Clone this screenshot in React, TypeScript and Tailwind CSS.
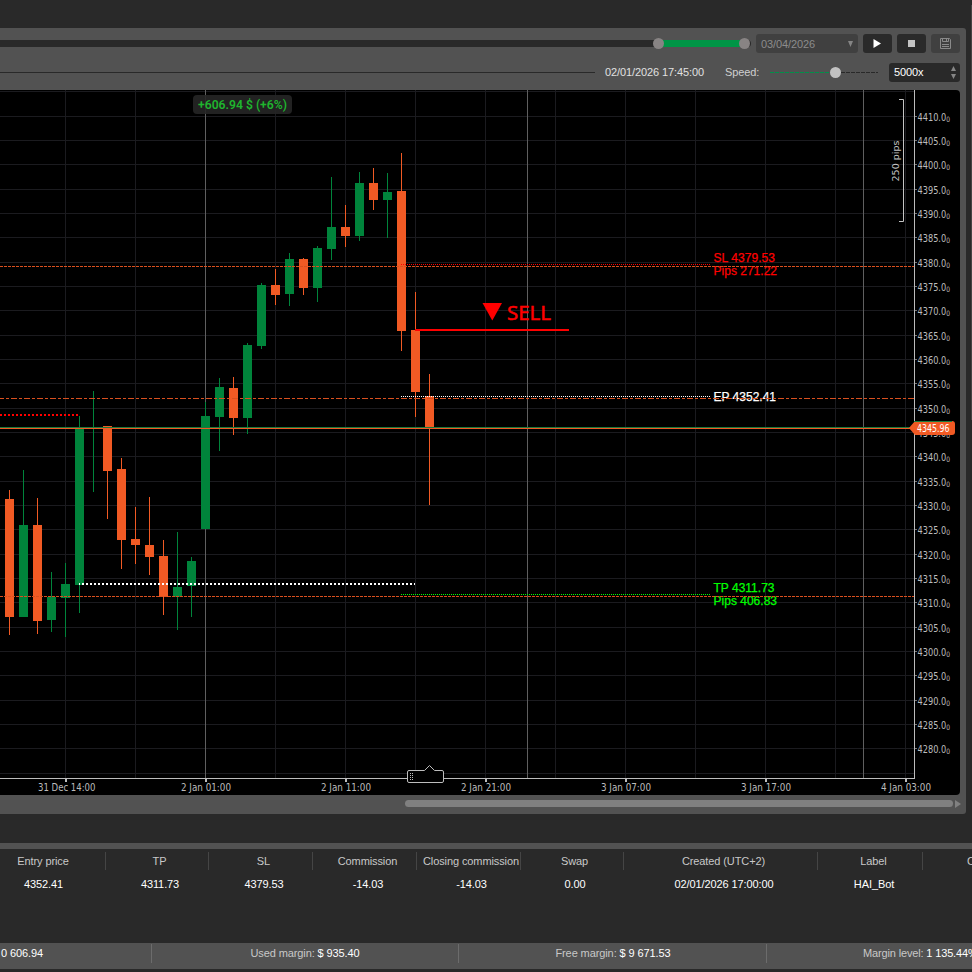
import clsx from 'clsx';

type Candle = [high: number, top: number, bottom: number, low: number, up: boolean];

const FIRST_X = 9;
const STEP_X = 14;

const CANDLES: Candle[] = [
  [490, 499, 617, 635, false],
  [470, 525, 617, 617, true],
  [498, 525, 621, 634, false],
  [572, 597, 620, 632, true],
  [563, 584, 598, 637, true],
  [416, 428, 585, 613, true],
  [391, 427, 428, 492, true],
  [426, 426, 471, 519, false],
  [458, 469, 540, 569, false],
  [507, 539, 545, 564, false],
  [497, 545, 557, 575, false],
  [540, 556, 597, 615, false],
  [532, 587, 597, 630, true],
  [557, 561, 586, 617, true],
  [402, 416, 529, 529, true],
  [378, 387, 417, 451, true],
  [377, 388, 418, 435, false],
  [343, 345, 418, 434, true],
  [283, 285, 346, 349, true],
  [269, 285, 295, 305, false],
  [253, 259, 294, 306, true],
  [258, 259, 288, 295, false],
  [246, 248, 288, 302, true],
  [177, 227, 249, 260, true],
  [205, 227, 236, 247, false],
  [172, 183, 236, 241, true],
  [168, 183, 200, 210, false],
  [173, 192, 200, 238, true],
  [153, 191, 331, 351, false],
  [292, 330, 392, 417, false],
  [374, 396, 427, 505, false],
];

const GRID_X = [65, 135, 275, 345, 415, 485, 555, 625, 695, 765, 835, 905];
const DAY_X = [205, 527, 863];

// one grid line every 5.00, starting one step above 4410
const GRID_Y = Array.from({ length: 29 }, (_, i) => 116 + Math.floor(((i - 1) * 73) / 3));

const PRICES = Array.from({ length: 27 }, (_, i) => ({
  label: `${4410 - i * 5}.0`,
  y: 116 + Math.floor((i * 73) / 3),
}));

const TIMES = [
  { x: 65, start: 38, width: 57.5, label: '31 Dec 14:00' },
  { x: 205, start: 181, width: 50, label: '2 Jan 01:00' },
  { x: 345, start: 321, width: 50, label: '2 Jan 11:00' },
  { x: 485, start: 461, width: 50, label: '2 Jan 21:00' },
  { x: 625, start: 601, width: 50, label: '3 Jan 07:00' },
  { x: 765, start: 741, width: 50, label: '3 Jan 17:00' },
  { x: 905, start: 881, width: 50, label: '4 Jan 03:00' },
];

const COLUMNS = [
  { title: 'Entry price', value: '4352.41', className: 'w-[106px] pr-[19px]' },
  { title: 'TP', value: '4311.73', className: 'w-[103px] pl-[5px]' },
  { title: 'SL', value: '4379.53', className: 'w-[104px] pl-[6px]' },
  { title: 'Commission', value: '-14.03', className: 'w-[104px] pl-[6px]' },
  { title: 'Closing commission', value: '-14.03', className: 'w-[104px] pl-[5px]' },
  { title: 'Swap', value: '0.00', className: 'w-[103px] pl-[5px]' },
  { title: 'Created (UTC+2)', value: '02/01/2026 17:00:00', className: 'w-[194px] pl-[6px]' },
  { title: 'Label', value: 'HAI_Bot', className: 'w-[105px] pl-[7px]' },
];

function Toolbar() {
  return (
    <div className="h-[62px] text-[11px] tracking-[-0.1px]">
      <div className="flex h-[31px] items-center pr-[6px]">
        <div className="relative h-[7px] w-[751px] rounded-r-sm bg-[#292929]">
          <div className="absolute left-[659px] top-0 h-[7px] w-[85px] bg-[#009546]" />
          <div className="absolute left-[653px] top-[-2px] size-[11px] rounded-full bg-[#888484]" />
          <div className="absolute left-[739px] top-[-2px] size-[11px] rounded-full bg-[#888484]" />
        </div>
        <div className="ml-[5px] flex h-[19px] w-[102px] items-center justify-between rounded-[3px] bg-[#404040] pl-[5px] pr-[5px] text-[#8c8c8c]">
          <span className="leading-[19px] pt-px">03/04/2026</span>
          <svg width="5" height="6" viewBox="0 0 5 6">
            <path d="M0 0h5L2.5 6z" fill="#858585" />
          </svg>
        </div>
        <button className="ml-[5px] flex h-[19px] w-[29px] items-center justify-center rounded-[3px] bg-[#2a2a2a] pr-px">
          <svg width="8" height="9" viewBox="0 0 8 9">
            <path d="M0.5 0v9L8 4.5z" fill="#fff" />
          </svg>
        </button>
        <button className="ml-[5px] flex h-[19px] w-[29px] items-center justify-center rounded-[3px] bg-[#2a2a2a]">
          <span className="size-[7px] bg-[#c4c4c4]" />
        </button>
        <button className="ml-[5px] flex h-[19px] w-[29px] items-center justify-center rounded-[3px] bg-[#404040]">
          <svg width="11" height="11" viewBox="0 0 11 11" fill="none" stroke="#8a8a8a">
            <path d="M.5 .5h9l1 1v9h-10z" />
            <path d="M2.5 .5v3h6v-3M6.5 1v2M2 6.5h7M2 8.5h7" />
          </svg>
        </button>
      </div>
      <div className="flex h-[27px] items-center pr-[6px] text-[#e0e0e0]">
        <div className="h-px w-[595px] bg-[#292929]" />
        <span className="ml-[10px] w-[100px] whitespace-nowrap">02/01/2026 17:45:00</span>
        <span className="ml-[20px] w-[34px] text-[#cfcfcf]">Speed:</span>
        <svg className="ml-[10px]" width="110" height="13" viewBox="769 66 110 13">
          <path d="M770 72.5H830" stroke="#00904a" strokeDasharray="4 1" />
          <path d="M841 72.5H878" stroke="#292929" strokeDasharray="4 1" />
          <circle cx="835.5" cy="72.5" r="5.5" fill="#c2c2c2" />
        </svg>
        <div className="ml-auto flex h-[19px] w-[71px] items-center justify-between rounded-[3px] bg-[#292929] pl-[5px] pr-[4px] text-white">
          <span>5000x</span>
          <svg width="5" height="13" viewBox="0 0 5 13" fill="#858585">
            <path d="M2.5 0L5 5H0zM0 8h5L2.5 13z" />
          </svg>
        </div>
      </div>
    </div>
  );
}

function Grid() {
  return (
    <g shapeRendering="crispEdges">
      {GRID_X.map((x) => (
        <rect key={x} x={x} y={90} width={1} height={688} fill="#1b1b1f" />
      ))}
      {GRID_Y.map((y) => (
        <rect key={y} x={0} y={y} width={914} height={1} fill="#1b1b1f" />
      ))}
      {DAY_X.map((x) => (
        <rect key={x} x={x} y={90} width={1} height={688} fill="#5f5f5f" />
      ))}
    </g>
  );
}

function Candles() {
  return (
    <g shapeRendering="crispEdges">
      {CANDLES.map(([high, top, bottom, low, up], i) => {
        const x = FIRST_X + i * STEP_X;
        return (
          <g key={x} fill={up ? '#00843b' : '#f15a24'}>
            <rect x={x} y={high} width={1} height={low - high} />
            <rect x={x - 4} y={top} width={9} height={bottom - top} />
          </g>
        );
      })}
    </g>
  );
}

function Axes() {
  return (
    <g className="font-['DejaVu_Sans',sans-serif]" fill="#bcbcbc">
      <g shapeRendering="crispEdges">
        <rect x={914} y={90} width={1} height={689} />
        <rect x={0} y={778} width={915} height={1} />
      </g>
      {PRICES.map(({ label, y }) => (
        <g key={label}>
          <rect x={915} y={y} width={2} height={1} fill="#777" />
          <text x={917.5} y={y + 5} fontSize={10.3} textLength={32.5} lengthAdjust="spacingAndGlyphs">
            {label}
            <tspan dy={1} fontSize={7.5}>0</tspan>
          </text>
        </g>
      ))}
      {TIMES.map(({ x, start, width, label }) => (
        <g key={x}>
          <rect x={x} y={779} width={2} height={3} />
          <text x={start} y={791} fontSize={10.3} textLength={width} lengthAdjust="spacingAndGlyphs">
            {label}
          </text>
        </g>
      ))}
    </g>
  );
}

function Levels() {
  return (
    <g fill="none" shapeRendering="crispEdges">
      <path d="M0 266.5H914" stroke="#d9501f" strokeDasharray="3 1" />
      <path d="M0 398.5H914" stroke="#d9501f" strokeDasharray="6 2 3 2" strokeDashoffset={2} />
      <path d="M0 596.5H914" stroke="#d9501f" strokeDasharray="3 1" />
      <path d="M0 427.5H914" stroke="#1a7a3c" />
      <path d="M0 428.5H914" stroke="#f15a24" />
      <path d="M0 415H78" stroke="#f00" strokeWidth={2} strokeDasharray="2 2" />
      <path d="M79 584H415" stroke="#fff" strokeWidth={2} strokeDasharray="2 2" strokeDashoffset={1} />
      <path d="M401 264.5H710" stroke="#f00" strokeDasharray="1 1" />
      <path d="M401 396.5H710" stroke="#fff" strokeDasharray="1 1" />
      <path d="M401 594.5H710" stroke="#0f0" strokeDasharray="1 1" />
      <path d="M415 330H569" stroke="#f00" strokeWidth={2} />
    </g>
  );
}

function LevelLabels() {
  return (
    <g className="font-['Liberation_Sans',sans-serif]" fontSize={12} strokeWidth={0.25}>
      <g fill="#f00" stroke="#f00">
        <text x={713.5} y={262} textLength={61.5}>SL 4379.53</text>
        <text x={713.5} y={275} textLength={63.5}>Pips 271.22</text>
      </g>
      <text x={713.5} y={401} fill="#fff" stroke="#fff" textLength={62.5}>EP 4352.41</text>
      <g fill="#0f0" stroke="#0f0">
        <text x={713.5} y={592} textLength={61}>TP 4311.73</text>
        <text x={713.5} y={605} textLength={63.5}>Pips 406.83</text>
      </g>
    </g>
  );
}

function Chart() {
  return (
    <svg className="block rounded-r-[4px] bg-black" width="960" height="705" viewBox="0 90 960 705">
      <Grid />
      <Candles />
      <Axes />
      <LevelLabels />
      <Levels />

      {/* sell marker */}
      <path d="M482.5 303H502L492.3 320.5z" fill="#f00" />
      <text
        className="font-['Noto_Sans',sans-serif]"
        x={507}
        y={320}
        fill="#f00"
        stroke="#f00"
        strokeWidth={0.5}
        fontSize={20.5}
        textLength={44}
        lengthAdjust="spacingAndGlyphs"
      >
        SELL
      </text>

      {/* running profit */}
      <rect x={193} y={95} width={99} height={19} rx={4} fill="#262626" fillOpacity={0.9} />
      <text
        className="font-['Roboto',sans-serif]"
        x={198}
        y={109}
        fill="#1fb52e"
        fontSize={12}
        fontWeight={600}
        textLength={89}
        lengthAdjust="spacingAndGlyphs"
      >
        +606.94 $ (+6%)
      </text>

      {/* scale ruler */}
      <path d="M899 99.5H903.5V221.5H899" fill="none" stroke="#c4c4c4" />
      <text
        className="font-['DejaVu_Sans',sans-serif]"
        transform="translate(899 181.5) rotate(-90)"
        fill="#c4c4c4"
        fontSize={9.5}
        textLength={41}
      >
        250 pips
      </text>

      {/* current price tag */}
      <path d="M909 428L915 421H952Q955 421 955 424V432Q955 435 952 435H915z" fill="#f15a24" />
      <path d="M914 421.5H952" stroke="#1a7a3c" />
      <text
        className="font-['DejaVu_Sans',sans-serif]"
        x={917}
        y={431.5}
        fill="#fff"
        fontSize={10.3}
        textLength={32.5}
        lengthAdjust="spacingAndGlyphs"
      >
        4345.96
      </text>

      {/* time handle */}
      <path
        d="M409 770.5H424.5L429.5 765.5L434.5 770.5H442Q443.5 770.5 443.5 772V781Q443.5 782.5 442 782.5H409Q407.5 782.5 407.5 781V772Q407.5 770.5 409 770.5z"
        fill="#000"
        stroke="#bdbdbd"
      />
      <g fill="#bdbdbd" shapeRendering="crispEdges">
        {[773, 775, 777, 779].map((y) => (
          <g key={y}>
            <rect x={410} y={y} width={1} height={1} />
            <rect x={412} y={y} width={1} height={1} />
          </g>
        ))}
      </g>
    </svg>
  );
}

function Positions() {
  return (
    <div className="flex h-[94px] overflow-hidden text-[11px] tracking-[-0.1px]">
      {COLUMNS.map((col) => (
        <div key={col.title} className="shrink-0 whitespace-nowrap text-center">
          <div
            className={clsx(
              'mt-[3px] h-[18px] border-r border-[#454545] leading-[18px] text-[#c8c8c8]',
              col.className,
            )}
          >
            {col.title}
          </div>
          <div className={clsx('mt-[5px] h-[18px] leading-[18px] text-white', col.className)}>
            {col.value}
          </div>
        </div>
      ))}
      <div className="mt-[3px] h-[18px] shrink-0 pl-[44px] leading-[18px] text-[#c8c8c8]">
        Comment
      </div>
    </div>
  );
}

function StatusBar() {
  return (
    <div className="flex h-[26px] overflow-hidden bg-[#525252] pt-px text-[11px] leading-[19px] tracking-[-0.1px] text-[#c8c8c8]">
      <div className="h-[19px] w-[152px] shrink-0 border-r border-[#6c6c6c] pl-px text-white">0 606.94</div>
      <div className="h-[19px] w-[307px] shrink-0 border-r border-[#6c6c6c] text-center">
        Used margin: <span className="text-white">$ 935.40</span>
      </div>
      <div className="h-[19px] w-[308px] shrink-0 border-r border-[#6c6c6c] pl-px text-center">
        Free margin: <span className="text-white">$ 9 671.53</span>
      </div>
      <div className="h-[19px] shrink-0 whitespace-nowrap pl-[96px] tracking-[-0.15px]">
        Margin level: <span className="text-white">1 135.44%</span>
      </div>
    </div>
  );
}

export default function App() {
  return (
    <div className="h-[972px] w-[972px] overflow-hidden bg-[#292929] font-['Liberation_Sans',Arial,sans-serif]">
      <div className="flex h-[843px] justify-between">
        <div className="mt-[28px] h-[786px] w-[966px] rounded-r-[3px] bg-[#525252]">
          <Toolbar />
          <Chart />
          <div className="flex h-[19px] items-center pb-[2px]">
            <div className="ml-[405px] h-[7px] w-[548px] rounded-full bg-[#808080]" />
            <svg className="ml-[2px]" width="6" height="8" viewBox="0 0 6 8">
              <path d="M0 0v8L6 4z" fill="#808080" />
            </svg>
          </div>
        </div>
        <div className="mt-[5px] h-[415px] w-px bg-[#454545]" />
      </div>
      <div className="h-[6px] bg-[#525252]" />
      <Positions />
      <StatusBar />
    </div>
  );
}
